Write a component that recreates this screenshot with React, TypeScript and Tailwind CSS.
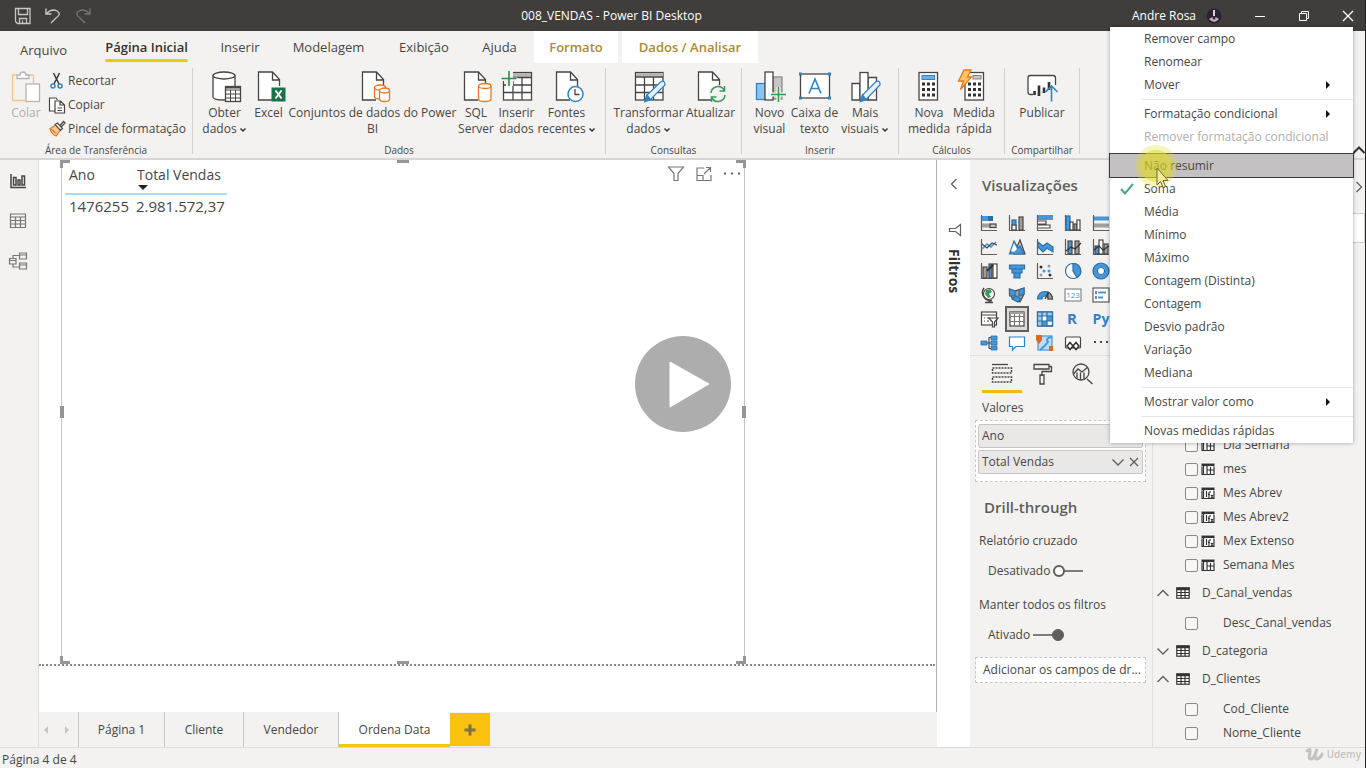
import React from "react";

type Kids = { children: React.ReactNode };

function RibbonIcon({ children }: Kids) {
  return (
    <svg viewBox="0 0 36 36" className="h-9 w-9 shrink-0" fill="none" stroke="#484644" strokeWidth="1.3" aria-hidden="true">
      {children}
    </svg>
  );
}

const Page = ({ x = 7 }: { x?: number }) => (
  <g transform={`translate(${x} 0)`}>
    <path d="M0.5 4H14.5L21.5 12V32H0.5Z" fill="#fff" stroke="none" />
    <path d="M14 32H0.5V4H14.5L21.5 11.5V18M14.5 4V12H21.5" />
  </g>
);

const Cylinder = ({ x, y, w, h }: { x: number; y: number; w: number; h: number }) => {
  const r = w / 2;
  return (
    <g transform={`translate(${x} ${y})`} stroke="#e8771a" fill="#fff">
      <path d={`M0 2.5V${h - 2.5}A${r} 2.5 0 0 0 ${w} ${h - 2.5}V2.5`} />
      <ellipse cx={r} cy="2.5" rx={r} ry="2.5" />
    </g>
  );
};

const icons = {
  paste: (
    <RibbonIcon>
      <path d="M9 7H4.500V32.500H17M21 7H25.500V15" stroke="#f3c48d" />
      <path d="M9 10.500V7H12C12 3 18 3 18 7H21V10.500Z" stroke="#b5b3b1" fill="#fff" />
      <rect x="18" y="16" width="13.500" height="17.500" stroke="#b5b3b1" fill="#fff" />
    </RibbonIcon>
  ),
  getData: (
    <RibbonIcon>
      <path d="M6 7.500V29C6 33 28 33 28 29V7.500" fill="#fff" />
      <ellipse cx="17" cy="7.500" rx="11" ry="3.500" fill="#fff" />
      <rect x="18.500" y="18.500" width="15" height="15" fill="#fff" />
      <path d="M18.500 22H33.500M18.500 26H33.500M18.500 30H33.500M23.500 22V33.500M28.500 22V33.500" strokeWidth="1" />
      <path d="M18.500 19.500H33.500" strokeWidth="2" />
    </RibbonIcon>
  ),
  excel: (
    <RibbonIcon>
      <Page />
      <rect x="20.500" y="19.500" width="14" height="14" fill="#177245" stroke="none" />
      <path d="M24.500 22.500L30.500 30.500M30.500 22.500L24.500 30.500" stroke="#fff" strokeWidth="2" />
    </RibbonIcon>
  ),
  datasets: (
    <RibbonIcon>
      <Page />
      <Cylinder x={19.5} y={17} w={11} h={14} />
      <Cylinder x={24.5} y={20} w={10} h={13.5} />
    </RibbonIcon>
  ),
  sql: (
    <RibbonIcon>
      <Page x={6} />
      <Cylinder x={20.5} y={15.5} w={12.5} h={18} />
    </RibbonIcon>
  ),
  enterData: (
    <RibbonIcon>
      <rect x="4.500" y="4.500" width="28" height="27.500" fill="#fff" />
      <rect x="5" y="5" width="27" height="4" fill="#b8b6b4" stroke="none" />
      <path d="M4.500 9.500H32.500M4.500 17H32.500M4.500 24.500H32.500M14 9.500V32M23 9.500V32" />
      <path d="M2 1H14V9.500H18.500V13H14V18H7V13H2Z" fill="#f3f2f1" stroke="none" />
      <path d="M2.500 10.500H17.500M10 3V18" stroke="#2f8a4c" strokeWidth="1.600" />
    </RibbonIcon>
  ),
  recent: (
    <RibbonIcon>
      <Page />
      <circle cx="26.500" cy="26" r="7.500" fill="#fff" stroke="#2f83c6" strokeWidth="1.500" />
      <path d="M26 21V26.500H30.500" />
    </RibbonIcon>
  ),
  transform: (
    <RibbonIcon>
      <rect x="4.500" y="4.500" width="27.500" height="27.500" fill="#fff" />
      <rect x="5" y="5" width="27" height="3.500" fill="#b8b6b4" stroke="none" />
      <path d="M4.500 9H32M4.500 17H32M4.500 24.500H32M13.500 9V32M22.500 9V32" />
      <path d="M14 33.500L16 27L30 13.500Q34 12 34 17L19.500 31.500Z" fill="#e7f2fb" stroke="#2f83c6" />
      <path d="M14 33.500L16 27L19.500 31.500Z" fill="#2f83c6" stroke="#2f83c6" />
    </RibbonIcon>
  ),
  refresh: (
    <RibbonIcon>
      <Page x={5} />
      <circle cx="25" cy="26" r="9" fill="#f3f2f1" stroke="none" />
      <path d="M18 25A7 7 0 0 1 31 22M31.500 18V23H26.500M32 27A7 7 0 0 1 19 30M18.500 34V29H23.500" stroke="#3a9a58" strokeWidth="1.500" />
    </RibbonIcon>
  ),
  newVisual: (
    <RibbonIcon>
      <rect x="21" y="9" width="9" height="22" fill="#c8c6c4" stroke="#8a8886" />
      <rect x="4.500" y="15.500" width="9" height="16" fill="#8cc3f0" stroke="#2f83c6" />
      <rect x="13" y="4" width="8" height="28" fill="#fff" />
      <path d="M19 26.500H34M26.500 19V34" stroke="#f3f2f1" strokeWidth="4" />
      <path d="M19 26.500H34M26.500 19V34" stroke="#2f9a4c" strokeWidth="1.500" />
    </RibbonIcon>
  ),
  textBox: (
    <RibbonIcon>
      <rect x="3.500" y="6" width="29" height="24" fill="#fff" />
      <path d="M12 25.500L18 11L24 25.500M14 20.500H22" stroke="#2f83c6" strokeWidth="1.600" />
      <path d="M2 4.500H5V7.500H2ZM31 4.500H34V7.500H31ZM2 28.500H5V31.500H2ZM31 28.500H34V31.500H31Z" fill="#2f83c6" stroke="none" />
    </RibbonIcon>
  ),
  moreVisuals: (
    <RibbonIcon>
      <path d="M5 15.500H13V32H5ZM21 9.500H29.500V32H21Z" fill="#fff" />
      <rect x="13" y="4.500" width="8" height="27.500" fill="#fff" />
      <path d="M13.500 33.500L15.500 27L29 13.500Q33.500 12 33 17L19 31.500Z" fill="#e7f2fb" stroke="#2f83c6" />
      <path d="M13.500 33.500L15.500 27L19 31.500Z" fill="#2f83c6" stroke="#2f83c6" />
    </RibbonIcon>
  ),
  measure: (
    <RibbonIcon>
      <rect x="8" y="4.500" width="18.500" height="27.500" fill="#fff" />
      <rect x="11" y="7.500" width="12.500" height="4" fill="#6eb1ea" stroke="#2f83c6" strokeWidth="1" />
      <path d="M11 16H24M11 21.500H24M11 27H24" strokeWidth="3" strokeDasharray="3 2" stroke="#333" />
    </RibbonIcon>
  ),
  quick: (
    <RibbonIcon>
      <rect x="9" y="4.500" width="18.500" height="27.500" fill="#fff" />
      <rect x="17" y="7.500" width="8" height="3.500" fill="#c8c6c4" stroke="#8a8886" strokeWidth="1" />
      <path d="M12 16H25M12 21.500H25M12 27H25" strokeWidth="3" strokeDasharray="3 2" stroke="#333" />
      <path d="M8 2H15L11.500 9H15.500L4.500 21.500L7.500 13H2.500Z" fill="#fbc56b" stroke="#e8771a" />
    </RibbonIcon>
  ),
  publish: (
    <RibbonIcon>
      <path d="M9 26.500H6.500Q4 26.500 4 24V10Q4 7.500 6.500 7.500H29Q31.500 7.500 31.500 10V17" fill="#fff" />
      <path d="M10.500 27V23M15 28V17.500M20 25V19.500M25 22V14" stroke="#333" strokeWidth="2.600" />
      <path d="M27.500 33.500V18M21.500 24L27.500 18L33.500 24" stroke="#2f83c6" strokeWidth="1.600" />
    </RibbonIcon>
  ),
};

const CaretDown = () => (
  <svg viewBox="0 0 8 6" className="ml-0.5 inline h-1.5 w-2" fill="none" stroke="#333" strokeWidth="1.5" aria-hidden="true">
    <path d="M1.500 1.500L4 4L6.500 1.500" />
  </svg>
);

function Tool({ icon, lines, caret, width, muted }: { icon: React.ReactNode; lines: string[]; caret?: boolean; width: string; muted?: boolean }) {
  return (
    <button className={`flex shrink-0 flex-col items-center whitespace-nowrap leading-4 ${width} ${muted ? "text-[#b0aeac]" : "text-[#484644]"}`}>
      {icon}
      <span className="mt-px text-center">
        {lines.map((l, i) => (
          <React.Fragment key={l}>
            {i > 0 && <br />}
            {l}
          </React.Fragment>
        ))}
        {caret && <CaretDown />}
      </span>
    </button>
  );
}

function Group({ label, width, children }: { label: string; width: string } & Kids) {
  return (
    <section className={`my-1 flex shrink-0 flex-col border-r border-[#d2d0ce] ${width}`}>
      <div className="flex flex-1 justify-center">{children}</div>
      <div className="h-2 text-center text-[10px] leading-2 text-[#484644]">{label}</div>
    </section>
  );
}

function SmallIcon({ children }: Kids) {
  return (
    <svg viewBox="0 0 18 18" className="h-[18px] w-[18px] shrink-0 overflow-visible" fill="none" stroke="#484644" strokeWidth="1.2" aria-hidden="true">
      {children}
    </svg>
  );
}

const B = "#4696d9";
const G = "#a19f9d";
const axes = <path d="M1.500 1V16.500H17" stroke="#605e5c" />;
const visuals: [string, React.ReactNode][] = [
  ["Barras empilhadas", <>{axes}<path d="M2 4.500H8" stroke={B} strokeWidth="5" /><path d="M8 4.500H13" stroke="#2a6fa8" strokeWidth="5" /><path d="M2 11.500H10" stroke={G} strokeWidth="4" /><rect x="10" y="10" width="6" height="3.500" fill="#c8c6c4" /></>],
  ["Colunas empilhadas", <>{axes}<rect x="4" y="6" width="4" height="10" fill={B} stroke="#2a6fa8" /><rect x="4" y="11" width="4" height="5" fill="#fff" /><rect x="11" y="3" width="4" height="13" fill={G} /></>],
  ["Barras clusterizadas", <>{axes}<path d="M2 3.500H17" stroke={B} strokeWidth="5" /><path d="M2 7H10V10H2M2 11H14V14H2" fill="#fff" /></>],
  ["Colunas clusterizadas", <>{axes}<rect x="2" y="2" width="4" height="14" fill={B} stroke="#2a6fa8" /><rect x="6" y="8" width="3" height="8" fill="#fff" /><rect x="10" y="10" width="3" height="6" fill={G} /><rect x="13" y="6" width="3" height="10" fill="#fff" /></>],
  ["Barras 100%", <>{axes}<path d="M2 4.500H17" stroke={B} strokeWidth="4" /><path d="M2 11.500H17" stroke={G} strokeWidth="4" /></>],
  ["Linhas", <>{axes}<path d="M2 11L7 6L11 9L16 4" stroke={B} strokeWidth="1.600" /><path d="M2 6L7 10L12 5L17 7" /></>],
  ["Área", <><path d="M6 16L12 2L17 16Z" fill="#c8c6c4" /><path d="M1.500 16L6 3L10 10L12 8L16 16Z" fill={B} stroke="#2a6fa8" /><path d="M3 13L6 5L9 11L6 14Z" fill="#fff" stroke="none" /></>],
  ["Área empilhada", <>{axes}<path d="M2 4L7 8L11 5L17 9V14L11 10L7 14L2 9Z" fill={B} stroke="#2a6fa8" /></>],
  ["Linha e coluna empilhada", <>{axes}<rect x="4" y="3" width="4" height="13" fill={B} /><rect x="11" y="3" width="4" height="13" fill={G} /><path d="M2 13L7 9L11 11L17 5" stroke="#333" /></>],
  ["Linha e coluna clusterizada", <>{axes}<rect x="3" y="8" width="4" height="8" fill={B} /><rect x="7" y="2" width="4" height="14" fill="#fff" /><rect x="12" y="6" width="4" height="10" fill={G} /><path d="M2 12L7 8L11 12L17 8" stroke="#333" /></>],
  ["Faixas", <>{axes}<rect x="3" y="5" width="4" height="11" fill={G} /><rect x="9" y="2" width="3" height="14" fill={B} /><rect x="13" y="2" width="4" height="14" fill="#fff" /><path d="M7 9L13 3" stroke="#333" strokeWidth="2" /></>],
  ["Funil", <path d="M1.500 3H16.500V7H1.500ZM4 7H14V11H4ZM6 11H12V16H6Z" fill={B} stroke="#2a6fa8" />],
  ["Dispersão", <>{axes}<g stroke="none"><circle cx="5" cy="5" r="1.500" fill="#333" /><circle cx="13" cy="4" r="1.500" fill={G} /><circle cx="8" cy="9" r="1.500" fill={B} /><circle cx="13" cy="9" r="1.500" fill={B} /><circle cx="5" cy="13" r="1.500" fill={G} /><circle cx="14" cy="13" r="1.500" fill="#333" /></g></>],
  ["Pizza", <><circle cx="9" cy="9" r="7.500" fill="#fff" stroke="#2a6fa8" /><path d="M9 9V1.500A7.500 7.500 0 0 1 13 15.500Z" fill={B} stroke="#2a6fa8" /></>],
  ["Rosca", <><circle cx="9" cy="9" r="6" stroke={B} strokeWidth="4" /><circle cx="9" cy="9" r="8" stroke="#2a6fa8" /><circle cx="9" cy="9" r="3.500" stroke="#2a6fa8" fill="#fff" /></>],
  ["Mapa", <><circle cx="9" cy="8" r="5.500" fill="#fff" /><path d="M6 4L10 3L12 6L9 8L11 11L8 12L5 8Z" fill="#3a9a58" stroke="none" /><path d="M4 2A8 8 0 0 0 12 14.500M9 14V16.500M5 16.500H13" strokeWidth="1.500" /></>],
  ["Mapa coroplético", <><path d="M1.500 3L7 5L16 2V8L12 16L5 13L1.500 8Z" fill={G} /><path d="M1.500 3L7 5V10H1.500ZM11 4L16 2V8L11 10Z" fill={B} stroke="#2a6fa8" /><path d="M4 13L8 10L13 13L10 16Z" fill={B} stroke="#2a6fa8" /></>],
  ["Medidor", <><path d="M1.500 13A7.500 7.500 0 0 1 16.500 13H12A3 3 0 0 0 6 13Z" fill={B} stroke="#2a6fa8" /><path d="M12 6Q16 8 16.500 13H12Z" fill={G} /><path d="M9 13L12 7" stroke="#333" /></>],
  ["Cartão", <><rect x="1" y="3" width="16" height="12" fill="#fff" stroke="#8a8886" /><text x="9" y="12" textAnchor="middle" fontSize="8" fill={B} stroke="none">123</text></>],
  ["Cartão de linhas", <><rect x="1" y="2" width="16" height="14" fill="#fff" stroke="#605e5c" /><path d="M4 5V8M4 10V13" stroke="#333" /><path d="M6 6.500H14M6 11.500H11" stroke={B} strokeWidth="2" /></>],
  ["Segmentação", <><rect x="1.500" y="2" width="15" height="13" fill="#fff" /><path d="M1.500 5H16.500M4 8H5M4 11H5M7 8H10M7 11H9" /><path d="M9 8H18L14.500 12V17H12.500V12Z" fill="#fff" /></>],
  ["Tabela", <><rect x="2" y="2" width="14" height="14" fill="#fff" /><path d="M2 6.500H16M2 11.500H16M6.500 2V16M11.500 2V16" stroke="#797775" /><path d="M2 3H16" strokeWidth="2" stroke={G} /></>],
  ["Matriz", <><rect x="1.500" y="2" width="15" height="14" fill="#fff" /><path d="M2 2.500H16V6H6V16H2Z" fill="#9dcaf0" stroke="none" /><path d="M11 6H16V11H11ZM6 11H11V16H6Z" fill={B} stroke="none" /><path d="M1.500 6H16.500M1.500 11H16.500M6 2V16M11 2V16M1.500 2H16.500V16H1.500Z" stroke="#2a6fa8" /></>],
  ["Visual do R", <text x="8" y="14" textAnchor="middle" fontSize="15" fontWeight="700" fill="#2f83c6" stroke="none">R</text>],
  ["Visual do Python", <text x="9" y="14" textAnchor="middle" fontSize="14" fontWeight="700" fill="#2f83c6" stroke="none">Py</text>],
  ["Influenciadores", <><path d="M6 9H11M9 3.500V14.500M9 3.500H11M9 14.500H11" /><path d="M1 7H7V11H1ZM11 2H17V6H11ZM11 7H17V11H11ZM11 12H17V16H11Z" fill={B} stroke="#2a6fa8" strokeWidth=".8" /></>],
  ["Perguntas e respostas", <path d="M1.500 3H16.500V12.500H8L4.500 16V12.500H1.500Z" fill="#fff" stroke="#2f83c6" />],
  ["ArcGIS", <><rect x="2" y="2" width="14" height="14" fill="#bddcf5" stroke={B} /><path d="M16 3Q9 4 12 8Q9 12 4 16" stroke={B} strokeWidth="2" /><path d="M0 1H6V6L3 10L0 6ZM13 12H17V17H13Z" fill="#d96b1a" stroke="none" /></>],
  ["Power Apps", <><rect x="1.500" y="3" width="15" height="11" rx="1" fill="#fff" /><path d="M3 12L6 8.500L9 12L6 15.500ZM9 12L12 8.500L15 12L12 15.500Z" fill="#fff" stroke="#333" strokeWidth="1.500" /></>],
  ["Mais visuais", <path d="M2 8H18" stroke="#484644" strokeWidth="1.800" strokeDasharray="2 4" />],
];

type MenuEntry = { text: string; sub?: boolean; disabled?: boolean; active?: boolean; checked?: boolean };
const menu: MenuEntry[][] = [
  [{ text: "Remover campo" }, { text: "Renomear" }, { text: "Mover", sub: true }],
  [{ text: "Formatação condicional", sub: true }, { text: "Remover formatação condicional", disabled: true }],
  [
    { text: "Não resumir", active: true },
    { text: "Soma", checked: true },
    { text: "Média" },
    { text: "Mínimo" },
    { text: "Máximo" },
    { text: "Contagem (Distinta)" },
    { text: "Contagem" },
    { text: "Desvio padrão" },
    { text: "Variação" },
    { text: "Mediana" },
  ],
  [{ text: "Mostrar valor como", sub: true }],
  [{ text: "Novas medidas rápidas" }],
];

function ContextMenu() {
  return (
    <div role="menu" className="absolute top-[27px] right-3 z-20 w-[243px] bg-white pb-px text-[#484644] shadow-[0_0_4px_rgba(0,0,0,0.35)]">
      {menu.map((section, i) => (
        <div key={i}>
          {i > 0 && (
            <div className="flex h-1.5 items-center pl-8">
              {i !== 2 && <hr className="w-full border-[#e6e5e4]" />}
            </div>
          )}
          {section.map((m) => (
            <button
              key={m.text}
              role="menuitem"
              disabled={m.disabled}
              className={`relative flex h-[23px] w-full items-center pr-[22px] pl-[34px] text-left ${m.active ? "bg-[#c3c1c1] outline-1 outline-[#3b3a39]" : ""} ${m.disabled ? "text-[#b0aeac]" : ""}`}
            >
              {m.active && (
                <svg viewBox="0 0 48 48" className="absolute -top-3 left-5 z-10 h-12 w-12" aria-hidden="true">
                  <circle cx="26" cy="24" r="21" fill="#e2d91f" fillOpacity=".3" />
                  <circle cx="26" cy="24" r="16" fill="#e2d91f" fillOpacity=".5" />
                  <path d="M27 26V43L30.500 39.500L33 45.500L35.500 44.500L33 38.500H38Z" fill="#f4ef9a" stroke="#6b6838" />
                </svg>
              )}
              {m.checked && (
                <svg viewBox="0 0 14 12" className="absolute left-2.5 h-3 w-3.5" fill="none" stroke="#4fa38c" strokeWidth="2" aria-hidden="true">
                  <path d="M1 6L5 10.500L13 1" />
                </svg>
              )}
              <span className="flex-1">{m.text}</span>
              {m.sub && (
                <svg viewBox="0 0 6 8" className="h-2 w-1.5" aria-hidden="true">
                  <path d="M1 0L5 4L1 8Z" fill="#111" />
                </svg>
              )}
            </button>
          ))}
        </div>
      ))}
    </div>
  );
}

const Chevron = ({ d, className }: { d: string; className: string }) => (
  <svg viewBox="0 0 12 12" className={`h-3 w-3 shrink-0 ${className}`} fill="none" stroke="currentColor" strokeWidth="1.3" aria-hidden="true">
    <path d={d} />
  </svg>
);
const LEFT = "M8.500 1L3.500 6L8.500 11";
const RIGHT = "M3.500 1L8.500 6L3.500 11";
const UP = "M0.500 9L6 3.500L11.500 9";
const DOWN = "M0.500 3.500L6 9L11.500 3.500";

function Well({ text }: { text: string }) {
  return (
    <div className="flex h-6 items-center rounded-[2px] border border-[#c8c6c4] bg-[#eae8e7] pr-0.5 pl-[3px]">
      <span className="flex-1">{text}</span>
      <button aria-label={`Opções de ${text}`} className="mr-1 text-[#605e5c]"><Chevron d={DOWN} className="" /></button>
      <button aria-label={`Remover ${text}`} className="text-[#605e5c]"><Chevron d="M2 2L10 10M10 2L2 10" className="" /></button>
    </div>
  );
}

function Toggle({ label, on }: { label: string; on?: boolean }) {
  return (
    <label className="relative flex h-5 items-center gap-0.5 pl-[13px]">
      {label}
      <input type="checkbox" role="switch" defaultChecked={on} className="sr-only" />
      <svg viewBox="0 0 32 12" className="h-3 w-8" stroke="#605e5c" aria-hidden="true">
        {on ? (
          <><path d="M1 6H25" strokeWidth="1.600" /><circle cx="26" cy="6" r="5.500" fill="#605e5c" /></>
        ) : (
          <><path d="M12 6H31" strokeWidth="1.600" /><circle cx="7" cy="6" r="5" fill="#fff" strokeWidth="2" /></>
        )}
      </svg>
    </label>
  );
}

type Kind = "table" | "calc";
function Field({ name, kind }: { name: string; kind?: Kind }) {
  return (
    <label className="flex h-6 items-center pl-8">
      <input type="checkbox" className="h-[13px] w-[13px] appearance-none rounded-[2px] border border-[#8a8886] bg-[#f8f7f6]" />
      <span className="ml-[3px] flex w-[22px]">
        {kind && (
          <svg viewBox="0 0 14 12" className="h-3 w-3.5" fill="none" stroke="#333" strokeWidth="1.2" aria-hidden="true">
            <path d="M1 3.500V11.500H13V3.500" fill="#fff" />
            <path d="M0.500 1.800H13.500" strokeWidth="2.500" />
            {kind === "table" ? <path d="M2.500 3V11M6 3V11M6 7H13M9.500 4V11" /> : <path d="M2.500 3V11M5.500 4V10M8 5V11M8 5H10M7 7.500H9M10 8L12 11M12 8L10 11" />}
          </svg>
        )}
      </span>
      {name}
    </label>
  );
}

function TableNode({ name, open }: { name: string; open?: boolean }) {
  return (
    <button className="flex h-7 w-full items-center pl-1 text-left">
      <Chevron d={open ? UP : DOWN} className="text-[#605e5c]" />
      <svg viewBox="0 0 14 12" className="ml-[7px] h-3 w-3.5 shrink-0" fill="none" stroke="#333" strokeWidth="1.2" aria-hidden="true">
        <rect x="0.800" y="0.800" width="12.400" height="10.400" fill="#fff" />
        <path d="M0.500 2H13.500" strokeWidth="2.500" />
        <path d="M1 5.500H13M1 8.500H13M5 2V11M9 2V11" />
      </svg>
      <span className="ml-3">{name}</span>
    </button>
  );
}

const tabs: [string, string][] = [
  ["Arquivo", "w-[87px] pt-1.5"],
  ["Página Inicial", "w-[119px] font-semibold text-[#323130]"],
  ["Inserir", "w-[68px]"],
  ["Modelagem", "w-[109px]"],
  ["Exibição", "w-[82px]"],
  ["Ajuda", "w-[69px]"],
  ["Formato", "w-[84px] bg-white font-semibold text-[#ac8a33]"],
  ["Dados / Analisar", "ml-1 w-[136px] bg-white font-semibold text-[#ac8a33]"],
];

const sheets: [string, string][] = [["Página 1", "w-[86px]"], ["Cliente", "w-[79px]"], ["Vendedor", "w-[95px]"]];

export default function App() {
  return (
    <div className="relative flex min-h-screen flex-col overflow-hidden border-r border-[#252423] bg-[#f3f2f1] font-['Open_Sans','Noto_Sans',sans-serif] text-[12px] leading-4 text-[#484644]">
      <header className="flex h-[31px] shrink-0 items-center bg-[#413d3b] text-white">
        <div className="flex flex-1 items-center gap-3 pl-3.5">
          <button aria-label="Salvar">
            <svg viewBox="0 0 18 18" className="h-[18px] w-[18px]" fill="none" stroke="#c8c6c4" strokeWidth="1.3" aria-hidden="true"><path d="M1.500 1.500H16V16.500H3.500L1.500 14.500ZM4.500 1.500V7.500H13.500V1.500M5.500 16.500V11.500H12.500V16.500M8.500 16V13.500" /></svg>
          </button>
          <button aria-label="Desfazer">
            <svg viewBox="0 0 18 18" className="h-[18px] w-[18px]" fill="none" stroke="#c8c6c4" strokeWidth="1.4" aria-hidden="true"><path d="M2 1.500V7H7.500M2.500 6.500Q8 1 13 4T12 11L7 16" /></svg>
          </button>
          <button aria-label="Refazer">
            <svg viewBox="0 0 18 18" className="h-[18px] w-[18px]" fill="none" stroke="#777371" strokeWidth="1.4" aria-hidden="true"><path d="M16 1.500V7H10.500M15.500 6.500Q10 1 5 4T6 11L11 16" /></svg>
          </button>
        </div>
        <h1 className="pr-[156px]">008_VENDAS - Power BI Desktop</h1>
        <div className="flex flex-1 items-center justify-end whitespace-nowrap">
          <span>Andre Rosa</span>
          <svg viewBox="0 0 16 16" className="ml-2.5 h-4 w-4" aria-hidden="true"><circle cx="8" cy="8" r="7.500" fill="#29233a" /><path d="M7 2H9V8H7Z" fill="#e8c9bd" /><path d="M3 11Q8 7 13 11Q8 17 3 11Z" fill="#c9a8b4" /><circle cx="8" cy="10" r="1.500" fill="#4a2430" /></svg>
          <button aria-label="Minimizar" className="ml-8"><svg viewBox="0 0 12 12" className="h-3 w-3" stroke="#fff" aria-hidden="true"><path d="M1 6.500H11" /></svg></button>
          <button aria-label="Restaurar" className="ml-8"><svg viewBox="0 0 12 12" className="h-3 w-3" fill="none" stroke="#fff" aria-hidden="true"><path d="M1.500 3.500H8.500V10.500H1.500ZM3.500 3.500V1.500H10.500V8.500H8.500" /></svg></button>
          <button aria-label="Fechar" className="mr-[11px] ml-8"><svg viewBox="0 0 12 12" className="h-3 w-3" stroke="#fff" strokeWidth="1.2" aria-hidden="true"><path d="M1 1L11 11M11 1L1 11" /></svg></button>
        </div>
      </header>

      <nav className="flex h-[33px] shrink-0 pb-px text-[13px]">
        {tabs.map(([name, cls], i) => (
          <button key={name} className={`flex shrink-0 items-center justify-center whitespace-nowrap ${cls}`}>
            <span className={`relative ${i === 1 ? "after:absolute after:inset-x-0 after:-bottom-[7px] after:h-[3px] after:rounded after:bg-[#f2c811]" : ""}`}>{name}</span>
          </button>
        ))}
      </nav>

      <div className="flex h-24 shrink-0 border-b-2 border-[#d8d6d4]">
        <Group label="Área de Transferência" width="w-[193px]">
          <div className="pl-1"><Tool icon={icons.paste} lines={["Colar"]} width="w-[44px]" muted /></div>
          <div className="flex flex-1 flex-col pt-px text-[#484644]">
            <button className="flex h-6 items-center gap-0.5">
              <SmallIcon><path d="M5.500 1L11 12M11.500 1L6 12" stroke="#333" strokeWidth="1.500" /><circle cx="5" cy="14" r="2" stroke="#2f83c6" strokeWidth="1.500" /><circle cx="12" cy="14" r="2" stroke="#2f83c6" strokeWidth="1.500" /></SmallIcon>
              Recortar
            </button>
            <button className="flex h-6 items-center gap-0.5">
              <SmallIcon><path d="M8 15H1.500V2H8L9.500 4" fill="#fff" /><path d="M7 5H12.500L16.500 9V17H7ZM12 5V9H16.500M9.500 12H14M9.500 14.500H14" fill="#fff" /></SmallIcon>
              Copiar
            </button>
            <button className="flex h-6 items-center gap-0.5 whitespace-nowrap">
              <SmallIcon><path d="M2 8.500L8 5L12.500 10L8 16Q3 14 2 8.500Z" fill="#f9c89a" stroke="#e8771a" /><path d="M3 9L8 13" stroke="#e8771a" /><path d="M7 4.500L9.500 3L14.500 8.500L12.500 10.500ZM12 5.500L15.500 1.500L17 3L13.500 6.500" fill="#fff" stroke="#484644" /></SmallIcon>
              Pincel de formatação
            </button>
          </div>
        </Group>
        <Group label="Dados" width="w-[413px]">
          <Tool icon={icons.getData} lines={["Obter", "dados"]} caret width="w-[46px]" />
          <Tool icon={icons.excel} lines={["Excel"]} width="w-[42px]" />
          <Tool icon={icons.datasets} lines={["Conjuntos de dados do Power", "BI"]} width="w-[166px]" />
          <Tool icon={icons.sql} lines={["SQL", "Server"]} width="w-[41px]" />
          <Tool icon={icons.enterData} lines={["Inserir", "dados"]} width="w-[40px]" />
          <Tool icon={icons.recent} lines={["Fontes", "recentes"]} caret width="w-[60px]" />
        </Group>
        <Group label="Consultas" width="w-[136px]">
          <Tool icon={icons.transform} lines={["Transformar", "dados"]} caret width="w-[74px]" />
          <Tool icon={icons.refresh} lines={["Atualizar"]} width="w-[50px]" />
        </Group>
        <Group label="Inserir" width="w-[157px]">
          <Tool icon={icons.newVisual} lines={["Novo", "visual"]} width="w-[40px]" />
          <Tool icon={icons.textBox} lines={["Caixa de", "texto"]} width="w-[50px]" />
          <Tool icon={icons.moreVisuals} lines={["Mais", "visuais"]} caret width="w-[51px]" />
        </Group>
        <Group label="Cálculos" width="w-[106px]">
          <Tool icon={icons.measure} lines={["Nova", "medida"]} width="w-[45px]" />
          <Tool icon={icons.quick} lines={["Medida", "rápida"]} width="w-[45px]" />
        </Group>
        <Group label="Compartilhar" width="w-[75px]">
          <Tool icon={icons.publish} lines={["Publicar"]} width="w-[50px]" />
        </Group>
        <button aria-label="Recolher faixa de opções" className="mb-0.5 ml-auto self-end text-[#323130]"><Chevron d={UP} className="stroke-2" /></button>
      </div>

      <div className="flex min-h-0 flex-1">
        <aside className="flex w-[39px] shrink-0 flex-col items-center gap-[22px] border-r border-[#e1dfdd] pt-3 pr-0.5">
          <button aria-label="Relatório"><SmallIcon><path d="M2 2V15.500H17" strokeWidth="1.500" /><path d="M4.500 5.500H7V13H4.500ZM9 8H11V13H9ZM13 4H15.500V13H13Z" strokeWidth="1.500" /></SmallIcon></button>
          <button aria-label="Dados"><SmallIcon><path d="M1.500 2H16.500V15.500H1.500ZM1.500 5H16.500M1.500 8.500H16.500M1.500 12H16.500M6.500 5V15.500M11.500 5V15.500" stroke="#797775" /></SmallIcon></button>
          <button aria-label="Modelo"><SmallIcon><path d="M0.500 6.500H7V12H0.500ZM0.500 8.500H7M10.500 1H17.500V7H10.500ZM10.500 3H17.500M10.500 11H17.500V17H10.500ZM10.500 13H17.500M4 6.500V3.500H10.500M4 12V15H10.500" stroke="#797775" /></SmallIcon></button>
        </aside>

        <div className="flex min-w-0 flex-1 flex-col">
          <main className="flex flex-1 flex-col border-r border-[#b3b0ad] bg-white pr-px pb-[46px]">
            <div className="flex flex-1 border-b-2 border-dotted border-[#8a8886] pl-[22px]">
              <section className="relative w-[78.3%] border-x border-[#c8c6c4]">
                <i className="absolute top-0 -left-0.5 h-2 w-2.5 border-t-[3px] border-l-[3px] border-[#979593]" />
                <i className="absolute top-0 -right-0.5 h-2 w-2.5 border-t-[3px] border-r-[3px] border-[#979593]" />
                <i className="absolute bottom-0 -left-0.5 h-2 w-2.5 border-b-[3px] border-l-[3px] border-[#979593]" />
                <i className="absolute -right-0.5 bottom-0 h-2 w-2.5 border-r-[3px] border-b-[3px] border-[#979593]" />
                <i className="absolute top-0 left-1/2 h-[3px] w-3 -translate-x-1/2 bg-[#979593]" />
                <i className="absolute bottom-0 left-1/2 h-[3px] w-3 -translate-x-1/2 bg-[#979593]" />
                <i className="absolute top-1/2 -left-0.5 h-3 w-1 -translate-y-1/2 bg-[#979593]" />
                <i className="absolute top-1/2 -right-0.5 h-3 w-1 -translate-y-1/2 bg-[#979593]" />
                <div className="flex items-start justify-between pr-[3px] pl-[3px]">
                  <table className="mt-[5px] text-[14px] leading-5">
                    <thead>
                      <tr className="border-b-2 border-[#a6dcfb]">
                        <th className="h-[29px] w-[67px] pl-1 text-left align-top font-normal">Ano</th>
                        <th className="relative h-[29px] pr-1.5 pl-[5px] text-left align-top font-normal">
                          Total Vendas
                          <svg viewBox="0 0 10 5" className="absolute bottom-[3px] left-1.5 h-[5px] w-2.5" aria-hidden="true"><path d="M0 0H10L5 5Z" fill="#222" /></svg>
                        </th>
                      </tr>
                    </thead>
                    <tbody className="text-[15px]">
                      <tr>
                        <td className="pt-px pr-[3px] text-right">1476255</td>
                        <td className="pt-px pr-0.5 text-right">2.981.572,37</td>
                      </tr>
                    </tbody>
                  </table>
                  <div className="flex items-center gap-2.5 pt-[5px]">
                    <button aria-label="Filtros do visual"><SmallIcon><path d="M1.500 2H16.500L11 8.500V15.500H7V8.500Z" stroke="#797775" /></SmallIcon></button>
                    <button aria-label="Modo de foco"><SmallIcon><path d="M9 3H2V15.500H16V10M2 10.500H8V15.500M9 9L15 3M11 2.500H15.500V7" stroke="#797775" /></SmallIcon></button>
                    <button aria-label="Mais opções"><SmallIcon><path d="M1 8.500H17" stroke="#605e5c" strokeWidth="2" strokeDasharray="2 5" /></SmallIcon></button>
                  </div>
                </div>
              </section>
            </div>
          </main>
          <div className="flex h-[35px] shrink-0 text-[#484644]">
            <div className="flex w-10 items-center justify-between border-r border-[#c8c6c4] pr-2 pl-1 text-[#c8c6c4]">
              <button aria-label="Página anterior"><svg viewBox="0 0 6 8" className="h-2 w-1.5" fill="currentColor" aria-hidden="true"><path d="M5 0V8L1 4Z" /></svg></button>
              <button aria-label="Próxima página"><svg viewBox="0 0 6 8" className="h-2 w-1.5" fill="currentColor" aria-hidden="true"><path d="M1 0V8L5 4Z" /></svg></button>
            </div>
            {sheets.map(([s, w]) => (
              <button key={s} className={`border-r border-[#c8c6c4] font-medium ${w}`}>{s}</button>
            ))}
            <button className="w-[111px] border-b-[3px] border-[#f2c811] bg-white pt-[3px] font-medium">Ordena Data</button>
            <button aria-label="Nova página" className="my-px flex w-10 items-center justify-center bg-[#f8c20e]">
              <svg viewBox="0 0 12 12" className="h-3 w-3" stroke="#7b7248" strokeWidth="3" aria-hidden="true"><path d="M6 0.500V11.500M0.500 6H11.500" /></svg>
            </button>
          </div>
        </div>

        <aside className="flex w-[33px] shrink-0 flex-col items-center bg-white pt-[18px] text-[#605e5c]">
          <button aria-label="Expandir filtros"><Chevron d={LEFT} className="" /></button>
          <svg viewBox="0 0 14 14" className="mt-[33px] ml-0.5 h-3.5 w-3.5" fill="none" stroke="currentColor" strokeWidth="1.200" aria-hidden="true"><path d="M12.500 1.500V12.500L7.500 8.500H1.500V5.500H7.500Z" /></svg>
          <h2 className="mt-3 text-[14px] font-bold text-[#323130] [writing-mode:vertical-rl]">Filtros</h2>
        </aside>

        <aside className="flex w-[182px] shrink-0 flex-col pt-[13px]">
          <h2 className="pl-3 text-[15px] leading-6 font-semibold text-[#605e5c]">Visualizações</h2>
          <div className="mt-3.5 grid grid-cols-[repeat(5,28px)] pl-[5px]">
            {visuals.map(([name, art]) => (
              <button key={name} aria-label={name} className={`flex h-6 items-center justify-center ${name === "Tabela" ? "mx-[3px] bg-[#dddbd9] outline-2 -outline-offset-1 outline-[#605e5c]" : ""}`}>
                <SmallIcon>{art}</SmallIcon>
              </button>
            ))}
          </div>
          <div className="flex h-[38px] border-t border-[#e1dfdd] pl-3">
            <button aria-label="Campos" className="flex w-10 justify-center border-b-[3px] border-[#f2b911] pt-1.5">
              <svg viewBox="0 0 24 24" className="h-6 w-6" fill="none" stroke="#484644" strokeWidth="1.300" aria-hidden="true"><path d="M2 2.500H18" /><path d="M2.500 6H21.500V11H2.500ZM2.500 15H21.500V20H2.500Z" strokeWidth="1.500" strokeDasharray="2 1" /></svg>
            </button>
            <button aria-label="Formato" className="flex w-10 justify-center pt-1.5">
              <svg viewBox="0 0 24 24" className="h-6 w-6" fill="none" stroke="#484644" strokeWidth="1.300" aria-hidden="true"><path d="M4 2.500H19V7H4ZM19 4.500H21.500V9.500H12V14M10 13H14V22H10Z" /></svg>
            </button>
            <button aria-label="Análise" className="flex w-10 justify-center pt-1.5">
              <svg viewBox="0 0 24 24" className="h-6 w-6" fill="none" stroke="#484644" strokeWidth="1.300" aria-hidden="true"><circle cx="11" cy="10" r="8" /><path d="M3.500 12L8 7L12 10L18 5M7 16V10.500M10.500 18V10.500M14 17V10.500M17 17L22.500 22" /></svg>
            </button>
          </div>
          <div className="flex flex-col pr-1.5 pl-[5px]">
            <div className="pt-[7px] pb-1 pl-[7px]">Valores</div>
            <div className="flex h-[62px] flex-col gap-0.5 border border-dashed border-[#c8c6c4] bg-white px-0.5 pt-[3px]">
              <Well text="Ano" />
              <Well text="Total Vendas" />
            </div>
            <h2 className="mt-[13px] pl-[9px] text-[15px] leading-6 font-semibold text-[#605e5c]">Drill-through</h2>
            <div className="mt-3 pl-1 leading-5">Relatório cruzado</div>
            <div className="mt-2.5"><Toggle label="Desativado" /></div>
            <div className="mt-3.5 pl-1 leading-5">Manter todos os filtros</div>
            <div className="mt-2.5"><Toggle label="Ativado" on /></div>
            <div className="mt-3 h-[26px] truncate border border-dashed border-[#c8c6c4] bg-white pl-[7px] leading-6">Adicionar os campos de dr...</div>
          </div>
        </aside>

        <aside className="flex w-[213px] shrink-0 flex-col border-l border-[#e1dfdd]">
          <div className="flex h-[53px] items-center justify-end"><button aria-label="Recolher campos" className="text-[#605e5c]"><Chevron d={RIGHT} className="" /></button></div>
          <input type="search" aria-label="Pesquisar" className="h-[30px] border border-[#d2d0ce] bg-white" />
          <div className="flex flex-1 flex-col justify-end pb-0.5">
            <div className="pb-0.5">
              <Field name="Dia Semana" kind="table" />
              <Field name="mes" kind="table" />
              <Field name="Mes Abrev" kind="calc" />
              <Field name="Mes Abrev2" kind="calc" />
              <Field name="Mex Extenso" kind="calc" />
              <Field name="Semana Mes" kind="table" />
            </div>
            <TableNode name="D_Canal_vendas" open />
            <div className="pt-1 pb-0.5"><Field name="Desc_Canal_vendas" /></div>
            <TableNode name="D_categoria" />
            <TableNode name="D_Clientes" open />
            <div className="pt-1">
              <Field name="Cod_Cliente" />
              <Field name="Nome_Cliente" />
            </div>
          </div>
        </aside>
      </div>

      <footer className="flex h-[21px] shrink-0 items-center justify-between border-t border-[#dddbd9] pr-1 pl-0.5">
        <span className="pt-[3px]">Página 4 de 4</span>
        <span className="flex items-center gap-0.5 pb-2 text-[10px] font-semibold text-[#c4c2c0]">
          <svg viewBox="0 0 20 16" className="h-4 w-5" fill="none" stroke="currentColor" strokeWidth="3" strokeLinecap="round" aria-hidden="true"><path d="M2 5Q6 1 5 7Q3 13 6 13Q9 13 12 3Q8 13 12 13Q16 12 17 8" /></svg>
          Udemy
        </span>
      </footer>

      <ContextMenu />
      <button aria-label="Reproduzir" className="absolute top-1/2 left-1/2 z-30 flex h-24 w-24 -translate-x-1/2 -translate-y-1/2 items-center justify-center rounded-full bg-[#adadad]">
        <svg viewBox="0 0 96 96" className="h-24 w-24" aria-hidden="true"><path d="M35 26L74 48L35 71Z" fill="#fff" stroke="#fff" strokeLinejoin="round" /></svg>
      </button>
    </div>
  );
}
